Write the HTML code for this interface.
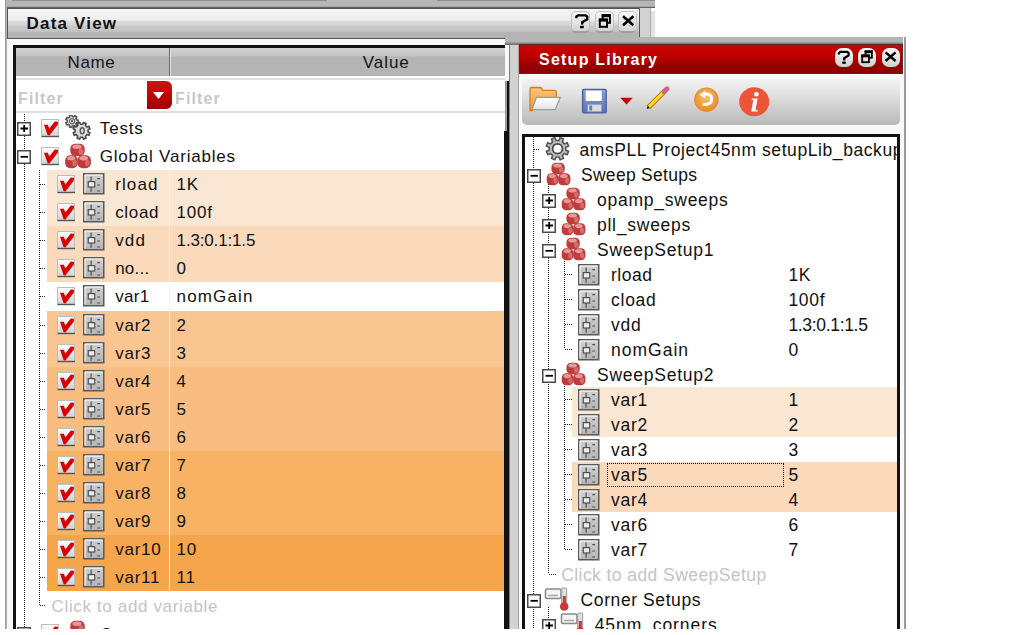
<!DOCTYPE html>
<html><head><meta charset="utf-8">
<style>
*{margin:0;padding:0;box-sizing:border-box}
html,body{width:1009px;height:635px;overflow:hidden;background:#fff}
body{position:relative;font-family:"Liberation Sans",sans-serif;color:#111}
.a{position:absolute}
.t{position:absolute;white-space:nowrap;font-size:17px;line-height:28px;height:28px}
.r{position:absolute;white-space:nowrap;font-size:17px;line-height:25px;height:25px}
svg{position:absolute;overflow:visible}
.tx{position:absolute;white-space:nowrap;font-size:17px;color:#111}
.dv{position:absolute;width:1px;background:repeating-linear-gradient(#222 0,#222 1px,transparent 1px,transparent 2px)}
.dh{position:absolute;height:1px;background:repeating-linear-gradient(90deg,#222 0,#222 1px,transparent 1px,transparent 2px)}
</style></head><body>
<svg width="0" height="0" style="position:absolute">
<defs>
<linearGradient id="gcb" x1="0" y1="0" x2="0" y2="1"><stop offset="0" stop-color="#fdfdfd"/><stop offset="1" stop-color="#d2d2d2"/></linearGradient>
<linearGradient id="gvar" x1="0" y1="0" x2="0" y2="1"><stop offset="0" stop-color="#d0d0d0"/><stop offset="1" stop-color="#b4b4b4"/></linearGradient>
<symbol id="cb" viewBox="0 0 20 19">
<rect x="0.5" y="0.5" width="17" height="17" fill="url(#gcb)" stroke="#bdbdbd"/>
<rect x="0.5" y="16.8" width="17.5" height="1.4" fill="#555"/>
<path d="M3 5.8L6.8 5.8L8.3 9.6L13.8 2.6L16.9 2.8L16.9 5.6L8.4 16.4L6.6 16.2Z" fill="#d80000"/>
</symbol>
<symbol id="var" viewBox="0 0 22 22">
<rect x="0.75" y="0.75" width="20" height="20" fill="url(#gvar)" stroke="#5a5a5a" stroke-width="1.5"/>
<path d="M2 2H19.5M2 2V19.5" stroke="#fff" stroke-width="1"/>
<path d="M8.1 3.5V18.8" stroke="#505050" stroke-width="1.2"/>
<rect x="5.3" y="8.6" width="6.4" height="5.4" fill="#ececec" stroke="#505050" stroke-width="1.2"/>
<path d="M14.3 5.7H17M14.3 12H17M14.3 18H17" stroke="#505050" stroke-width="1.2"/>
</symbol>
<symbol id="plus" viewBox="0 0 14 14">
<rect x="0.75" y="0.75" width="12.5" height="12.5" fill="#fff" stroke="#4a4a4a" stroke-width="1.5"/>
<path d="M3.5 6.5H11M7.2 3V10" stroke="#000" stroke-width="1.8"/>
</symbol>
<symbol id="minus" viewBox="0 0 14 14">
<rect x="0.75" y="0.75" width="12.5" height="12.5" fill="#fff" stroke="#4a4a4a" stroke-width="1.5"/>
<path d="M3.5 6.8H11" stroke="#000" stroke-width="1.8"/>
</symbol>
<symbol id="gears" viewBox="0 0 27 26">
<path d="M11.64 4.96L13.27 4.92L13.27 7.48L11.64 7.44L10.86 9.05L11.91 10.30L9.91 11.90L8.92 10.60L7.18 11.00L6.86 12.60L4.35 12.03L4.76 10.45L3.36 9.33L1.91 10.08L0.79 7.76L2.28 7.10L2.28 5.30L0.79 4.64L1.91 2.32L3.36 3.07L4.76 1.95L4.35 0.37L6.86 -0.20L7.18 1.40L8.92 1.80L9.91 0.50L11.91 2.10L10.86 3.35Z" fill="#e8e8e8" stroke="#555" stroke-width="1.5" stroke-linejoin="round"/>
<circle cx="7" cy="6.2" r="2.6" fill="#fff" stroke="#666" stroke-width="1.3"/>
<ellipse cx="7" cy="6.2" rx="1" ry="1.4" fill="#555"/>
<path d="M23.10 16.94L24.98 17.74L23.90 20.35L22.00 19.59L20.39 21.20L21.15 23.10L18.54 24.18L17.74 22.30L15.46 22.30L14.66 24.18L12.05 23.10L12.81 21.20L11.20 19.59L9.30 20.35L8.22 17.74L10.10 16.94L10.10 14.66L8.22 13.86L9.30 11.25L11.20 12.01L12.81 10.40L12.05 8.50L14.66 7.42L15.46 9.30L17.74 9.30L18.54 7.42L21.15 8.50L20.39 10.40L22.00 12.01L23.90 11.25L24.98 13.86L23.10 14.66Z" fill="#dcdcdc" stroke="#4a4a4a" stroke-width="1.6" stroke-linejoin="round"/>
<ellipse cx="17.2" cy="15.8" rx="2" ry="3" fill="none" stroke="#555" stroke-width="1.4"/>
</symbol>
<symbol id="cubes" viewBox="0 0 27 26">
<rect x="5.3" y="0.8" width="14.4" height="12.4" rx="5" fill="#c03c3c"/>
<ellipse cx="12" cy="3.8" rx="4.6" ry="2.2" fill="#e49a9a"/>
<ellipse cx="16" cy="8.5" rx="2.4" ry="3.2" fill="#d46c6c"/>
<rect x="0.2" y="12.2" width="12.6" height="13" rx="5" fill="#c03c3c"/>
<ellipse cx="6.2" cy="15.3" rx="4" ry="2.2" fill="#e49a9a"/>
<ellipse cx="9.6" cy="20" rx="2.2" ry="3.2" fill="#d46c6c"/>
<rect x="12.5" y="12.2" width="13.4" height="13" rx="5" fill="#c03c3c"/>
<ellipse cx="18.8" cy="15.3" rx="4.2" ry="2.2" fill="#e49a9a"/>
<ellipse cx="22.3" cy="20" rx="2.2" ry="3.2" fill="#d46c6c"/>
</symbol>
<symbol id="gear" viewBox="0 0 26 24">
<path d="M20.77 13.15L23.61 14.27L22.17 17.73L19.37 16.53L17.33 18.57L18.53 21.37L15.07 22.81L13.95 19.97L11.05 19.97L9.93 22.81L6.47 21.37L7.67 18.57L5.63 16.53L2.83 17.73L1.39 14.27L4.23 13.15L4.23 10.25L1.39 9.13L2.83 5.67L5.63 6.87L7.67 4.83L6.47 2.03L9.93 0.59L11.05 3.43L13.95 3.43L15.07 0.59L18.53 2.03L17.33 4.83L19.37 6.87L22.17 5.67L23.61 9.13L20.77 10.25Z" fill="#bdbdbd" stroke="#555" stroke-width="1.6" stroke-linejoin="round"/>
<circle cx="12.5" cy="11.7" r="4.9" fill="#fff" stroke="#4a4a4a" stroke-width="1.8"/>
</symbol>
<symbol id="therm" viewBox="0 0 26 24">
<rect x="1.5" y="2" width="15.5" height="9.5" rx="1.5" fill="#f4f4f4" stroke="#8a8a8a" stroke-width="1.6"/>
<path d="M4 8.5H14" stroke="#aaa" stroke-width="1.5"/>
<rect x="17.7" y="1" width="5" height="18" rx="1.2" fill="#e0e0e0" stroke="#999" stroke-width="1"/>
<rect x="18.8" y="9" width="3" height="10" fill="#c83838"/>
<circle cx="20.2" cy="19.5" r="4.3" fill="#c83838"/>
</symbol>
</defs></svg>

<!-- ============ LEFT DOCK: Data View ============ -->
<div class="a" id="dock" style="left:5px;top:0;width:650px;height:629px;background:#f7f7f7;border-left:1px solid #9a9a9a"></div>
<div class="a" style="left:6px;top:0;width:1px;height:629px;background:#b4b4b4"></div>
<!-- top strip -->
<div class="a" style="left:7px;top:0;width:648px;height:8px;background:linear-gradient(#b6b6b6 0,#b6b6b6 6px,#a8a8a8 6px,#a8a8a8 7px,#606060 7px)"></div>
<div class="a" style="left:12px;top:0;width:315px;height:1px;background:#8e8e8e;border-radius:0 0 0 3px"></div>
<div class="a" style="left:437px;top:0;width:218px;height:1px;background:#8e8e8e"></div>
<!-- title bar -->
<div class="a" style="left:7px;top:8px;width:633px;height:31px;border:1px solid #555;background:linear-gradient(#f4f4f4 0,#eeeeee 38%,#dadada 44%,#d4d4d4 56%,#c8c8c8 60%,#c4c4c4 77%,#b4b4b4 79%,#b4b4b4 100%)"></div>


<!-- Data View buttons -->
<div class="a" style="left:571px;top:11px;width:19px;height:22px;border-radius:5px;border:1px solid #c0c0c0;border-bottom:2px solid #a0a0a0;background:linear-gradient(#f8f8f8,#e6e6e6 50%,#d2d2d2)"></div>
<div class="a" style="left:595px;top:11px;width:19px;height:22px;border-radius:5px;border:1px solid #c0c0c0;border-bottom:2px solid #a0a0a0;background:linear-gradient(#f8f8f8,#e6e6e6 50%,#d2d2d2)"></div>
<div class="a" style="left:618px;top:11px;width:19px;height:22px;border-radius:5px;border:1px solid #c0c0c0;border-bottom:2px solid #a0a0a0;background:linear-gradient(#f8f8f8,#e6e6e6 50%,#d2d2d2)"></div>
<svg style="left:571px;top:11px" width="70" height="22">
<path d="M5.4 7.2V5.6L7 4.4H14.6L16.2 5.6V8.2L11.2 11.2V13.6" fill="none" stroke="#000" stroke-width="2.4" stroke-linejoin="miter"/>
<rect x="9" y="14.8" width="3.8" height="2.4" fill="#000"/>
<rect x="31.7" y="4.2" width="7.2" height="7.6" fill="none" stroke="#000" stroke-width="2"/>
<rect x="30.7" y="3.2" width="9.2" height="3" fill="#000"/>
<rect x="28.8" y="8.6" width="7.2" height="7.2" fill="#e6e6e6" stroke="#000" stroke-width="2"/>
<rect x="27.8" y="7.6" width="9.2" height="3" fill="#000"/>
<path d="M52 5.3L62.4 14.2M62.4 5.3L52 14.2" stroke="#000" stroke-width="2.6"/>
</svg>
<!-- right strip of dock -->
<div class="a" style="left:640px;top:8px;width:10px;height:29px;background:#d2d2d2"></div>
<div class="a" style="left:650px;top:8px;width:1px;height:29px;background:#b0b0b0"></div>
<div class="a" style="left:651px;top:8px;width:4px;height:29px;background:#e2e2e2;border-top:3px solid #fff"></div>

<!-- table -->
<div class="a" style="left:13px;top:45px;width:500px;height:590px;border-left:3px solid #111;border-top:3px solid #111"></div>
<!-- header -->
<div class="a" style="left:16px;top:48px;width:489px;height:28px;background:linear-gradient(#d2d2d2 0,#c4c4c4 8px,#b4b4b4 9px,#b4b4b4 100%)"></div>
<div class="a" style="left:169px;top:48px;width:1px;height:28px;background:#6a6a6a"></div>
<div class="a" style="left:170px;top:48px;width:1px;height:28px;background:#e6e6e6"></div>


<!-- filter row -->
<div class="a" style="left:16px;top:76px;width:489px;height:37px;background:#fff"></div>
<div class="a" style="left:16px;top:78px;width:489px;height:2px;background:#e0e0e0"></div>
<div class="a" style="left:16px;top:111px;width:489px;height:2px;background:#e0e0e0"></div>

<div class="a" style="left:147px;top:81px;width:25px;height:28px;border-radius:0 6px 6px 0;background:linear-gradient(#d41010,#a00000)"></div>
<svg style="left:153px;top:92px" width="12" height="8"><path d="M0 0H11L5.5 7Z" fill="#fff"/></svg>


<div class="tx" style="left:26.6px;top:8px;line-height:31px;font-size:17px;letter-spacing:1.18px;color:#111;font-weight:bold">Data View</div>
<div class="tx" style="left:67.5px;top:48px;line-height:29px;font-size:17px;letter-spacing:0.61px;color:#151515">Name</div>
<div class="tx" style="left:362.8px;top:48px;line-height:29px;font-size:17px;letter-spacing:0.94px;color:#151515">Value</div>
<div class="tx" style="left:18.0px;top:83px;line-height:31px;font-size:16px;letter-spacing:1.13px;color:#c8c8c8;font-weight:bold">Filter</div>
<div class="tx" style="left:175.0px;top:83px;line-height:31px;font-size:16px;letter-spacing:1.13px;color:#c8c8c8;font-weight:bold">Filter</div>

<!-- tree body white -->
<div class="a" style="left:16px;top:113px;width:489px;height:516px;background:#fff"></div>
<div class="a" style="left:47px;top:170px;width:458px;height:56px;background:#f9e6d3"></div>
<div class="a" style="left:47px;top:226px;width:458px;height:56px;background:#fbd9bb"></div>
<div class="a" style="left:47px;top:311px;width:458px;height:56px;background:#f9c692"></div>
<div class="a" style="left:47px;top:367px;width:458px;height:84px;background:#f9bd82"></div>
<div class="a" style="left:47px;top:451px;width:458px;height:84px;background:#f8b263"></div>
<div class="a" style="left:47px;top:535px;width:458px;height:56px;background:#f6a54b"></div>
<div class="a" style="left:169px;top:170px;width:1px;height:421px;background:#eef2f2"></div>
<div class="dv" style="left:24px;top:114px;height:515px"></div>
<div class="dv" style="left:39px;top:170px;height:435px"></div>
<div class="dh" style="left:40px;top:605px;width:6px"></div>
<svg class="ic" style="left:17px;top:122px" width="14" height="14"><use href="#plus"/></svg>
<svg class="ic" style="left:41px;top:119px" width="20" height="19"><use href="#cb"/></svg>
<svg class="ic" style="left:65px;top:115px" width="27" height="26"><use href="#gears"/></svg>
<div class="tx" style="left:99.8px;top:115px;line-height:28px;font-size:17px;letter-spacing:0.84px">Tests</div>
<svg class="ic" style="left:17px;top:150px" width="14" height="14"><use href="#minus"/></svg>
<svg class="ic" style="left:41px;top:147px" width="20" height="19"><use href="#cb"/></svg>
<svg class="ic" style="left:65px;top:143px" width="27" height="26"><use href="#cubes"/></svg>
<div class="tx" style="left:99.8px;top:143px;line-height:28px;font-size:17px;letter-spacing:0.78px">Global Variables</div>
<div class="dh" style="left:40px;top:184px;width:5px"></div>
<svg class="ic" style="left:57px;top:175px" width="20" height="19"><use href="#cb"/></svg>
<svg class="ic" style="left:83px;top:173px" width="22" height="22"><use href="#var"/></svg>
<div class="tx" style="left:115.2px;top:171px;line-height:28px;font-size:17px;letter-spacing:1.11px">rload</div>
<div class="tx" style="left:176.6px;top:171px;line-height:28px;font-size:17px;letter-spacing:0.75px">1K</div>
<div class="dh" style="left:40px;top:212px;width:5px"></div>
<svg class="ic" style="left:57px;top:203px" width="20" height="19"><use href="#cb"/></svg>
<svg class="ic" style="left:83px;top:201px" width="22" height="22"><use href="#var"/></svg>
<div class="tx" style="left:115.2px;top:199px;line-height:28px;font-size:17px;letter-spacing:0.67px">cload</div>
<div class="tx" style="left:176.6px;top:199px;line-height:28px;font-size:17px;letter-spacing:0.75px">100f</div>
<div class="dh" style="left:40px;top:240px;width:5px"></div>
<svg class="ic" style="left:57px;top:231px" width="20" height="19"><use href="#cb"/></svg>
<svg class="ic" style="left:83px;top:229px" width="22" height="22"><use href="#var"/></svg>
<div class="tx" style="left:115.2px;top:227px;line-height:28px;font-size:17px;letter-spacing:1.16px">vdd</div>
<div class="tx" style="left:176.6px;top:227px;line-height:28px;font-size:17px;letter-spacing:-0.16px">1.3:0.1:1.5</div>
<div class="dh" style="left:40px;top:268px;width:5px"></div>
<svg class="ic" style="left:57px;top:259px" width="20" height="19"><use href="#cb"/></svg>
<svg class="ic" style="left:83px;top:257px" width="22" height="22"><use href="#var"/></svg>
<div class="tx" style="left:115.2px;top:255px;line-height:28px;font-size:17px;letter-spacing:0.22px">no...</div>
<div class="tx" style="left:176.6px;top:255px;line-height:28px;font-size:17px;letter-spacing:0.75px">0</div>
<div class="dh" style="left:40px;top:296px;width:5px"></div>
<svg class="ic" style="left:57px;top:287px" width="20" height="19"><use href="#cb"/></svg>
<svg class="ic" style="left:83px;top:285px" width="22" height="22"><use href="#var"/></svg>
<div class="tx" style="left:115.2px;top:283px;line-height:28px;font-size:17px;letter-spacing:0.29px">var1</div>
<div class="tx" style="left:176.6px;top:283px;line-height:28px;font-size:17px;letter-spacing:1.15px">nomGain</div>
<div class="dh" style="left:40px;top:325px;width:5px"></div>
<svg class="ic" style="left:57px;top:316px" width="20" height="19"><use href="#cb"/></svg>
<svg class="ic" style="left:83px;top:314px" width="22" height="22"><use href="#var"/></svg>
<div class="tx" style="left:115.2px;top:312px;line-height:28px;font-size:17px;letter-spacing:0.75px">var2</div>
<div class="tx" style="left:176.6px;top:312px;line-height:28px;font-size:17px;letter-spacing:0.75px">2</div>
<div class="dh" style="left:40px;top:353px;width:5px"></div>
<svg class="ic" style="left:57px;top:344px" width="20" height="19"><use href="#cb"/></svg>
<svg class="ic" style="left:83px;top:342px" width="22" height="22"><use href="#var"/></svg>
<div class="tx" style="left:115.2px;top:340px;line-height:28px;font-size:17px;letter-spacing:0.75px">var3</div>
<div class="tx" style="left:176.6px;top:340px;line-height:28px;font-size:17px;letter-spacing:0.75px">3</div>
<div class="dh" style="left:40px;top:381px;width:5px"></div>
<svg class="ic" style="left:57px;top:372px" width="20" height="19"><use href="#cb"/></svg>
<svg class="ic" style="left:83px;top:370px" width="22" height="22"><use href="#var"/></svg>
<div class="tx" style="left:115.2px;top:368px;line-height:28px;font-size:17px;letter-spacing:0.75px">var4</div>
<div class="tx" style="left:176.6px;top:368px;line-height:28px;font-size:17px;letter-spacing:0.75px">4</div>
<div class="dh" style="left:40px;top:409px;width:5px"></div>
<svg class="ic" style="left:57px;top:400px" width="20" height="19"><use href="#cb"/></svg>
<svg class="ic" style="left:83px;top:398px" width="22" height="22"><use href="#var"/></svg>
<div class="tx" style="left:115.2px;top:396px;line-height:28px;font-size:17px;letter-spacing:0.75px">var5</div>
<div class="tx" style="left:176.6px;top:396px;line-height:28px;font-size:17px;letter-spacing:0.75px">5</div>
<div class="dh" style="left:40px;top:437px;width:5px"></div>
<svg class="ic" style="left:57px;top:428px" width="20" height="19"><use href="#cb"/></svg>
<svg class="ic" style="left:83px;top:426px" width="22" height="22"><use href="#var"/></svg>
<div class="tx" style="left:115.2px;top:424px;line-height:28px;font-size:17px;letter-spacing:0.75px">var6</div>
<div class="tx" style="left:176.6px;top:424px;line-height:28px;font-size:17px;letter-spacing:0.75px">6</div>
<div class="dh" style="left:40px;top:465px;width:5px"></div>
<svg class="ic" style="left:57px;top:456px" width="20" height="19"><use href="#cb"/></svg>
<svg class="ic" style="left:83px;top:454px" width="22" height="22"><use href="#var"/></svg>
<div class="tx" style="left:115.2px;top:452px;line-height:28px;font-size:17px;letter-spacing:0.75px">var7</div>
<div class="tx" style="left:176.6px;top:452px;line-height:28px;font-size:17px;letter-spacing:0.75px">7</div>
<div class="dh" style="left:40px;top:493px;width:5px"></div>
<svg class="ic" style="left:57px;top:484px" width="20" height="19"><use href="#cb"/></svg>
<svg class="ic" style="left:83px;top:482px" width="22" height="22"><use href="#var"/></svg>
<div class="tx" style="left:115.2px;top:480px;line-height:28px;font-size:17px;letter-spacing:0.75px">var8</div>
<div class="tx" style="left:176.6px;top:480px;line-height:28px;font-size:17px;letter-spacing:0.75px">8</div>
<div class="dh" style="left:40px;top:521px;width:5px"></div>
<svg class="ic" style="left:57px;top:512px" width="20" height="19"><use href="#cb"/></svg>
<svg class="ic" style="left:83px;top:510px" width="22" height="22"><use href="#var"/></svg>
<div class="tx" style="left:115.2px;top:508px;line-height:28px;font-size:17px;letter-spacing:0.75px">var9</div>
<div class="tx" style="left:176.6px;top:508px;line-height:28px;font-size:17px;letter-spacing:0.75px">9</div>
<div class="dh" style="left:40px;top:549px;width:5px"></div>
<svg class="ic" style="left:57px;top:540px" width="20" height="19"><use href="#cb"/></svg>
<svg class="ic" style="left:83px;top:538px" width="22" height="22"><use href="#var"/></svg>
<div class="tx" style="left:115.2px;top:536px;line-height:28px;font-size:17px;letter-spacing:0.75px">var10</div>
<div class="tx" style="left:176.6px;top:536px;line-height:28px;font-size:17px;letter-spacing:0.75px">10</div>
<div class="dh" style="left:40px;top:577px;width:5px"></div>
<svg class="ic" style="left:57px;top:568px" width="20" height="19"><use href="#cb"/></svg>
<svg class="ic" style="left:83px;top:566px" width="22" height="22"><use href="#var"/></svg>
<div class="tx" style="left:115.2px;top:564px;line-height:28px;font-size:17px;letter-spacing:0.75px">var11</div>
<div class="tx" style="left:176.6px;top:564px;line-height:28px;font-size:17px;letter-spacing:0.75px">11</div>
<div class="tx" style="left:51.6px;top:593px;line-height:28px;font-size:17px;letter-spacing:0.64px;color:#c4c4c4">Click to add variable</div>
<svg class="ic" style="left:17px;top:627px" width="14" height="14"><use href="#plus"/></svg>
<svg class="ic" style="left:41px;top:624px" width="20" height="19"><use href="#cb"/></svg>
<svg class="ic" style="left:65px;top:620px" width="27" height="26"><use href="#cubes"/></svg>
<div class="tx" style="left:99.8px;top:621px;line-height:28px;font-size:17px;letter-spacing:0.75px">Corners</div>


<!-- ============ SETUP LIBRARY WINDOW ============ -->
<div class="a" style="left:505px;top:37px;width:401px;height:592px;background:#f8f8f8"></div>
<div class="a" style="left:505px;top:37px;width:398px;height:8px;background:linear-gradient(#b4b4b4 0,#b4b4b4 5px,#8a8a8a 6px,#6a6a6a 8px)"></div>
<div class="a" style="left:505px;top:81px;width:2px;height:50px;background:#9a9a9a"></div>
<div class="a" style="left:507px;top:81px;width:2px;height:548px;background:#111"></div>
<div class="a" style="left:504px;top:131px;width:3px;height:498px;background:#111"></div>
<div class="a" style="left:509px;top:45px;width:10px;height:584px;background:#d2d2d2;border-left:1px solid #808080;border-right:1px solid #a4a4a4"></div>
<div class="a" style="left:904px;top:37px;width:2px;height:592px;background:#9a9a9a"></div>
<!-- red title -->
<div class="a" style="left:519px;top:44px;width:384px;height:30px;border:1px solid #5a2a2a;background:linear-gradient(#c80000 0,#c00000 40%,#9a0000 70%,#8a0000 100%)"></div>


<!-- Setup buttons -->
<div class="a" style="left:835px;top:48px;width:18px;height:19px;border-radius:7px;background:linear-gradient(#fdfdfd,#cfcfcf)"></div>
<div class="a" style="left:858px;top:48px;width:18px;height:19px;border-radius:7px;background:linear-gradient(#fdfdfd,#cfcfcf)"></div>
<div class="a" style="left:882px;top:48px;width:18px;height:19px;border-radius:7px;background:linear-gradient(#fdfdfd,#cfcfcf)"></div>
<svg style="left:835px;top:48px" width="70" height="21">
<path d="M3.9 6.4V5L5.4 3.9H12.2L13.6 5V7.4L9.2 10.2V12.4" fill="none" stroke="#000" stroke-width="2.2"/>
<rect x="7.2" y="13.6" width="3.6" height="2.2" fill="#000"/>
<rect x="30.6" y="3.4" width="6.3" height="6.3" fill="none" stroke="#000" stroke-width="1.8"/>
<rect x="29.6" y="2.4" width="8.3" height="2.8" fill="#000"/>
<rect x="27.2" y="7.5" width="6.7" height="6.7" fill="#e6e6e6" stroke="#000" stroke-width="1.8"/>
<rect x="26.2" y="6.5" width="8.7" height="2.8" fill="#000"/>
<path d="M50.6 4.4L60.6 13M60.6 4.4L50.6 13" stroke="#000" stroke-width="2.4"/>
</svg>
<div class="tx" style="left:539.0px;top:45px;line-height:30px;font-size:16px;letter-spacing:1.24px;color:#fff;font-weight:bold">Setup Library</div>

<!-- toolbar -->
<div class="a" style="left:522px;top:79px;width:378px;height:46px;border-radius:4px 4px 5px 5px;background:linear-gradient(#f2f2f2 0,#e4e4e4 30%,#d4d4d4 55%,#c8c8c8 75%,#b8b8b8 100%)"></div>

<!-- toolbar icons -->
<svg style="left:522px;top:82px" width="260" height="40">
<defs>
<linearGradient id="gfold" x1="0" y1="0" x2="0" y2="1"><stop offset="0" stop-color="#f9c77a"/><stop offset="1" stop-color="#ee9a35"/></linearGradient>
<linearGradient id="gsheet" x1="0" y1="0" x2="0" y2="1"><stop offset="0" stop-color="#ffffff"/><stop offset="1" stop-color="#e4e4e4"/></linearGradient>
<linearGradient id="gflop" x1="0" y1="0" x2="0" y2="1"><stop offset="0" stop-color="#8aa0d2"/><stop offset="1" stop-color="#5a74b4"/></linearGradient>
<radialGradient id="gund" cx="0.5" cy="0.4" r="0.6"><stop offset="0" stop-color="#f8c070"/><stop offset="1" stop-color="#ea8a28"/></radialGradient>
</defs>
<!-- folder -->
<path d="M8 28.5V7.2Q8 5.5 9.6 5.5H18Q19.5 5.5 20 7.4L20.6 8.4H32.6Q34.2 8.4 34.2 10V16H16L10.5 28.5Z" fill="url(#gfold)" stroke="#d57a1e" stroke-width="1.3"/>
<path d="M14.5 15.4H38.3L33.2 27.7H9.8Z" fill="url(#gsheet)" stroke="#9a9a9a" stroke-width="1.2"/>
<!-- floppy -->
<rect x="60.6" y="7.4" width="23.6" height="23.4" rx="1.2" fill="url(#gflop)" stroke="#4c62a0" stroke-width="1.4"/>
<rect x="63.7" y="8.6" width="16" height="10.4" fill="#fff"/>
<rect x="65.5" y="22.3" width="14" height="7.4" fill="#dcdcdc" stroke="#8a9ac4" stroke-width="0.8"/>
<rect x="67.3" y="23.4" width="2.8" height="5.2" fill="#6a80bc"/>
<!-- dropdown triangle -->
<path d="M98.2 15.8H110.7L104.5 22.6Z" fill="#c80000"/>
<!-- pencil -->
<path d="M126.5 25.3L142.8 9" stroke="#c8781e" stroke-width="5.2" stroke-linecap="butt"/>
<path d="M126.5 25.3L142.8 9" stroke="#f6e020" stroke-width="3" stroke-linecap="butt"/>
<path d="M142 9.8L145 6.8" stroke="#c86a7a" stroke-width="5" stroke-linecap="round"/>
<path d="M125.7 23.6L127.8 25.9L124.8 27Z" fill="#111"/>
<!-- undo -->
<circle cx="184.4" cy="17.6" r="11.6" fill="url(#gund)" stroke="#e88a2a" stroke-width="1.2"/>
<path d="M181.6 12.4Q189.6 10.8 189.6 17.4Q189.6 22.8 182 22.4" fill="none" stroke="#fff" stroke-width="3" stroke-linecap="round"/>
<path d="M177.3 12.8L183.5 8.4L183.2 16.6Z" fill="#fff"/>
<!-- info -->
<ellipse cx="232.2" cy="19.8" rx="15" ry="14.5" fill="#ee5438"/>
<circle cx="234.4" cy="12.2" r="2.3" fill="#fff"/>
<path d="M230 16.6H235.6L233.6 27.2Q233.4 28.4 235.8 28.2L235.4 29.4H229.2L231.2 18.6Q231.4 17.6 229.6 17.8Z" fill="#fff"/>
</svg>
<!-- tree box -->
<div class="a" style="left:522px;top:134px;width:378px;height:500px;border:3px solid #111;border-bottom:none;background:#fff"></div>
<div class="a" style="left:0;top:0;width:897px;height:629px;overflow:hidden">
<div class="a" style="left:572px;top:387px;width:325px;height:50px;background:#f9e6d3"></div>
<div class="a" style="left:572px;top:462px;width:325px;height:50px;background:#fbd9bb"></div>
<div class="a" style="left:607px;top:463px;width:177px;height:24px;border:1px dotted #000"></div>
<div class="dv" style="left:533px;top:137px;height:492px"></div>
<div class="dh" style="left:534px;top:149px;width:6px"></div>
<div class="dv" style="left:548px;top:182px;height:392px"></div>
<div class="dh" style="left:549px;top:574px;width:8px"></div>
<div class="dv" style="left:564px;top:257px;height:92px"></div>
<div class="dv" style="left:564px;top:382px;height:167px"></div>
<div class="dv" style="left:548px;top:607px;height:22px"></div>
<svg class="ic" style="left:545px;top:137px" width="26" height="24"><use href="#gear"/></svg>
<div class="tx" style="left:579.5px;top:138px;line-height:25px;font-size:17.5px;letter-spacing:0.58px">amsPLL Project45nm setupLib_backup</div>
<svg class="ic" style="left:527px;top:169px" width="14" height="14"><use href="#minus"/></svg>
<svg class="ic" style="left:546px;top:162px" width="26" height="24"><use href="#cubes"/></svg>
<div class="tx" style="left:581.0px;top:163px;line-height:25px;font-size:17.5px;letter-spacing:0.28px">Sweep Setups</div>
<svg class="ic" style="left:542px;top:194px" width="14" height="14"><use href="#plus"/></svg>
<svg class="ic" style="left:561px;top:187px" width="26" height="24"><use href="#cubes"/></svg>
<div class="tx" style="left:597.0px;top:188px;line-height:25px;font-size:17.5px;letter-spacing:0.75px">opamp_sweeps</div>
<svg class="ic" style="left:542px;top:219px" width="14" height="14"><use href="#plus"/></svg>
<svg class="ic" style="left:561px;top:212px" width="26" height="24"><use href="#cubes"/></svg>
<div class="tx" style="left:597.0px;top:213px;line-height:25px;font-size:17.5px;letter-spacing:0.75px">pll_sweeps</div>
<svg class="ic" style="left:542px;top:244px" width="14" height="14"><use href="#minus"/></svg>
<svg class="ic" style="left:561px;top:237px" width="26" height="24"><use href="#cubes"/></svg>
<div class="tx" style="left:597.0px;top:238px;line-height:25px;font-size:17.5px;letter-spacing:0.75px">SweepSetup1</div>
<svg class="ic" style="left:542px;top:369px" width="14" height="14"><use href="#minus"/></svg>
<svg class="ic" style="left:561px;top:362px" width="26" height="24"><use href="#cubes"/></svg>
<div class="tx" style="left:597.0px;top:363px;line-height:25px;font-size:17.5px;letter-spacing:0.75px">SweepSetup2</div>
<svg class="ic" style="left:527px;top:594px" width="14" height="14"><use href="#minus"/></svg>
<svg class="ic" style="left:544px;top:587px" width="26" height="24"><use href="#therm"/></svg>
<div class="tx" style="left:580.6px;top:588px;line-height:25px;font-size:17.5px;letter-spacing:0.59px">Corner Setups</div>
<svg class="ic" style="left:542px;top:619px" width="14" height="14"><use href="#plus"/></svg>
<svg class="ic" style="left:560px;top:612px" width="26" height="24"><use href="#therm"/></svg>
<div class="tx" style="left:594.7px;top:613px;line-height:25px;font-size:17.5px;letter-spacing:0.92px">45nm_corners</div>
<div class="dh" style="left:565px;top:274px;width:7px"></div>
<svg class="ic" style="left:578px;top:264px" width="22" height="22"><use href="#var"/></svg>
<div class="tx" style="left:611.0px;top:263px;line-height:25px;font-size:17.5px;letter-spacing:0.51px">rload</div>
<div class="tx" style="left:788.4px;top:263px;line-height:25px;font-size:17.5px;letter-spacing:0.75px">1K</div>
<div class="dh" style="left:565px;top:299px;width:7px"></div>
<svg class="ic" style="left:578px;top:289px" width="22" height="22"><use href="#var"/></svg>
<div class="tx" style="left:611.0px;top:288px;line-height:25px;font-size:17.5px;letter-spacing:0.75px">cload</div>
<div class="tx" style="left:788.4px;top:288px;line-height:25px;font-size:17.5px;letter-spacing:0.75px">100f</div>
<div class="dh" style="left:565px;top:324px;width:7px"></div>
<svg class="ic" style="left:578px;top:314px" width="22" height="22"><use href="#var"/></svg>
<div class="tx" style="left:611.0px;top:313px;line-height:25px;font-size:17.5px;letter-spacing:0.75px">vdd</div>
<div class="tx" style="left:788.4px;top:313px;line-height:25px;font-size:17.5px;letter-spacing:-0.32px">1.3:0.1:1.5</div>
<div class="dh" style="left:565px;top:349px;width:7px"></div>
<svg class="ic" style="left:578px;top:339px" width="22" height="22"><use href="#var"/></svg>
<div class="tx" style="left:611.0px;top:338px;line-height:25px;font-size:17.5px;letter-spacing:1.00px">nomGain</div>
<div class="tx" style="left:788.4px;top:338px;line-height:25px;font-size:17.5px;letter-spacing:0.75px">0</div>
<div class="dh" style="left:565px;top:399px;width:7px"></div>
<svg class="ic" style="left:578px;top:389px" width="22" height="22"><use href="#var"/></svg>
<div class="tx" style="left:611.0px;top:388px;line-height:25px;font-size:17.5px;letter-spacing:0.75px">var1</div>
<div class="tx" style="left:788.4px;top:388px;line-height:25px;font-size:17.5px;letter-spacing:0.75px">1</div>
<div class="dh" style="left:565px;top:424px;width:7px"></div>
<svg class="ic" style="left:578px;top:414px" width="22" height="22"><use href="#var"/></svg>
<div class="tx" style="left:611.0px;top:413px;line-height:25px;font-size:17.5px;letter-spacing:0.75px">var2</div>
<div class="tx" style="left:788.4px;top:413px;line-height:25px;font-size:17.5px;letter-spacing:0.75px">2</div>
<div class="dh" style="left:565px;top:449px;width:7px"></div>
<svg class="ic" style="left:578px;top:439px" width="22" height="22"><use href="#var"/></svg>
<div class="tx" style="left:611.0px;top:438px;line-height:25px;font-size:17.5px;letter-spacing:0.75px">var3</div>
<div class="tx" style="left:788.4px;top:438px;line-height:25px;font-size:17.5px;letter-spacing:0.75px">3</div>
<div class="dh" style="left:565px;top:474px;width:7px"></div>
<svg class="ic" style="left:578px;top:464px" width="22" height="22"><use href="#var"/></svg>
<div class="tx" style="left:611.0px;top:463px;line-height:25px;font-size:17.5px;letter-spacing:0.75px">var5</div>
<div class="tx" style="left:788.4px;top:463px;line-height:25px;font-size:17.5px;letter-spacing:0.75px">5</div>
<div class="dh" style="left:565px;top:499px;width:7px"></div>
<svg class="ic" style="left:578px;top:489px" width="22" height="22"><use href="#var"/></svg>
<div class="tx" style="left:611.0px;top:488px;line-height:25px;font-size:17.5px;letter-spacing:0.75px">var4</div>
<div class="tx" style="left:788.4px;top:488px;line-height:25px;font-size:17.5px;letter-spacing:0.75px">4</div>
<div class="dh" style="left:565px;top:524px;width:7px"></div>
<svg class="ic" style="left:578px;top:514px" width="22" height="22"><use href="#var"/></svg>
<div class="tx" style="left:611.0px;top:513px;line-height:25px;font-size:17.5px;letter-spacing:0.75px">var6</div>
<div class="tx" style="left:788.4px;top:513px;line-height:25px;font-size:17.5px;letter-spacing:0.75px">6</div>
<div class="dh" style="left:565px;top:549px;width:7px"></div>
<svg class="ic" style="left:578px;top:539px" width="22" height="22"><use href="#var"/></svg>
<div class="tx" style="left:611.0px;top:538px;line-height:25px;font-size:17.5px;letter-spacing:0.75px">var7</div>
<div class="tx" style="left:788.4px;top:538px;line-height:25px;font-size:17.5px;letter-spacing:0.75px">7</div>
<div class="tx" style="left:561.2px;top:563px;line-height:25px;font-size:17.5px;letter-spacing:0.43px;color:#c4c4c4">Click to add SweepSetup</div>

</div>

<div class="a" style="left:0;top:629px;width:1009px;height:6px;background:#fff;z-index:50"></div>
</body></html>
